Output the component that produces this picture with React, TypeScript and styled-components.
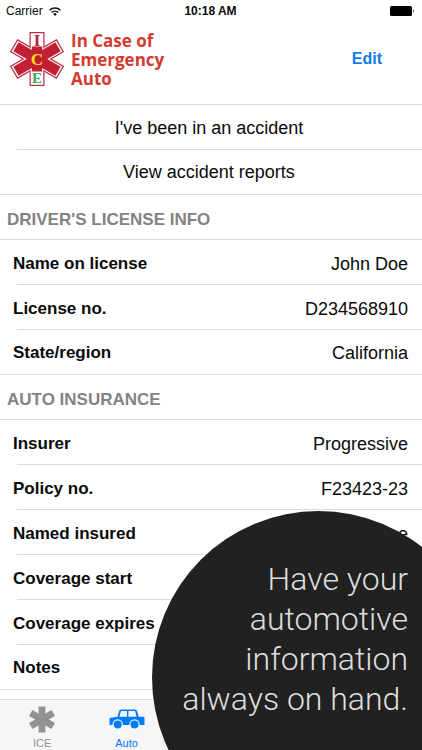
import React from "react";
import styled, { createGlobalStyle } from "styled-components";

const GlobalStyle = createGlobalStyle`
  *, *::before, *::after { box-sizing: border-box; }
  body {
    margin: 0;
    background: #fff;
    color: #0a0a0a;
    font-family: "Liberation Sans", Arial, sans-serif;
  }
`;

const line = "#dedee0";
const blue = "#007aff";

const Screen = styled.div`
  position: relative;
  display: flex;
  flex-direction: column;
  height: 100vh;
  overflow: hidden;
`;

const StatusBar = styled.div`
  display: grid;
  grid-template-columns: 1fr auto 1fr;
  align-items: center;
  height: 22px;
  flex: none;
  padding: 0 7px 0 6px;
  font-size: 12px;
  line-height: 20px;
`;

const Carrier = styled.span`
  display: flex;
  align-items: center;
  gap: 6px;
`;

const Clock = styled.time`
  font-weight: 700;
`;

const Battery = styled.svg`
  justify-self: end;
`;

const Header = styled.header`
  display: flex;
  align-items: center;
  justify-content: space-between;
  flex: none;
  height: 83px;
  padding: 0 40px 8px 10px;
  border-bottom: 1px solid ${line};
`;

const Brand = styled.div`
  display: flex;
  align-items: center;
  gap: 7px;
`;

const BrandName = styled.h1`
  width: 100px;
  margin: 0;
  color: #d43b30;
  font-family: "Open Sans", "Noto Sans", sans-serif;
  font-size: 17px;
  font-weight: 700;
  line-height: 19px;
`;

const EditButton = styled.button`
  padding: 0;
  border: 0;
  background: none;
  color: #1279ee;
  font: 700 16px/20px "Liberation Sans", Arial, sans-serif;
`;

const Content = styled.main`
  flex: 1;
  min-height: 0;
  overflow: hidden;
`;

const Group = styled.div`
  border-bottom: 1px solid ${line};

  & > * + *::before {
    content: "";
    position: absolute;
    top: -1px;
    left: 17px;
    right: 0;
    border-top: 1px solid ${line};
  }
`;

const ActionButton = styled.button`
  position: relative;
  display: block;
  width: 100%;
  height: 45px;
  padding: 0 4px 0 0;
  border: 0;
  background: none;
  color: inherit;
  font: 400 18px/44px "Liberation Sans", Arial, sans-serif;

  &:last-child { height: 44px; }
`;

const SectionTitle = styled.h2`
  height: 45px;
  margin: 0;
  padding: 3px 7px 0;
  border-bottom: 1px solid ${line};
  color: #838383;
  font-size: 17px;
  font-weight: 700;
  line-height: 44px;
`;

const Fields = styled(Group).attrs({ as: "dl" })`
  margin: 0;
`;

const Field = styled.div`
  position: relative;
  display: flex;
  justify-content: space-between;
  height: 45px;
  padding: 0 14px 0 13px;
  font-size: 17px;
  line-height: 48px;

  &:last-child {
    height: 44px;
    line-height: 46px;
  }
`;

const Label = styled.dt`
  font-weight: 700;
`;

const Value = styled.dd`
  margin: 0;
  font-size: 18px;
`;

const TabBar = styled.nav`
  display: flex;
  flex: none;
  height: 51px;
  border-top: 1px solid ${line};
  background: #f6f6f6;
`;

const Tab = styled.a<{ $active?: boolean }>`
  display: flex;
  flex: 0 0 20%;
  flex-direction: column;
  align-items: center;
  gap: 3px;
  padding-top: 6px;
  color: ${(p) => (p.$active ? blue : "#929292")};
  font-size: 11px;
  line-height: 14px;
  text-decoration: none;
`;

const Callout = styled.aside`
  position: absolute;
  right: -63px;
  bottom: -94px;
  width: 333px;
  height: 333px;
  padding: 48px 77px 0 0;
  border-radius: 50%;
  background: #212121;
  color: #dedede;
  font-family: Roboto, sans-serif;
  font-size: 32px;
  font-weight: 300;
  line-height: 40px;
  text-align: right;
  white-space: nowrap;
`;

const CalloutText = styled.p`
  margin: 0;
`;

const angles = [60, -60, 0];

const StarLogo = () => (
  <svg width="54" height="56" viewBox="-27 -28 54 56" aria-hidden="true">
    {angles.map((a) => (
      <rect key={a} x="-7.5" y="-27" width="15" height="54" fill="#b92c3c" transform={`rotate(${a})`} />
    ))}
    {angles.map((a) => (
      <rect key={a} x="-6.3" y="-25.8" width="12.6" height="51.6" fill="#fff" transform={`rotate(${a})`} />
    ))}
    {angles.slice(0, 2).map((a) => (
      <rect key={a} x="-5.2" y="-24.3" width="10.4" height="48.6" fill="#c21f35" transform={`rotate(${a})`} />
    ))}
    <rect x="-5.2" y="-12.5" width="10.4" height="25" fill="#c21f35" />
    <g fontFamily="Liberation Serif" fontWeight="700" textAnchor="middle">
      <text y="-13" fontSize="17" fill="#b3203a">I</text>
      <text y="5.5" fontSize="17" fill="#ffe11a">C</text>
      <text y="24" fontSize="15" fill="#35ad5c">E</text>
    </g>
  </svg>
);

const WifiIcon = () => (
  <svg width="12" height="9" viewBox="0 0 12 9" fill="none" stroke="#111" strokeWidth="1.5" aria-hidden="true">
    <path d="M.6 3.3a7.7 7.7 0 0 1 10.8 0M2.6 5.5a4.9 4.9 0 0 1 6.8 0" />
    <path d="M6 9 4.1 7a2.8 2.8 0 0 1 3.8 0z" fill="#111" stroke="none" />
  </svg>
);

const BatteryIcon = () => (
  <Battery width="25" height="10" viewBox="0 0 25 10" aria-label="Battery full">
    <rect width="22" height="10" rx="1.5" />
    <path d="M23 3.2q1.8 1.8 0 3.6z" />
  </Battery>
);

const AsteriskIcon = () => (
  <svg width="26" height="27" viewBox="-13 -13.5 26 27" fill="currentColor" aria-hidden="true">
    {angles.map((a) => (
      <rect key={a} x="-3.4" y="-13" width="6.8" height="26" transform={`rotate(${a})`} />
    ))}
  </svg>
);

const CarIcon = () => (
  <svg width="36" height="27" viewBox="0 0 36 27" aria-hidden="true">
    <path
      fill="currentColor"
      fillRule="evenodd"
      d="M12 3.5h14q1.6 0 2 1.5l1.7 5.800H34q1.5 0 1.5 1.5V19H.5v-5.700q0-1.300 1.300-1.500L8.500 10.800l1.700-5.800Q10.600 3.500 12 3.500zM12 5 10.400 10.800H18V5zM19.400 5v5.800h8.200L26 5z"
    />
    <g fill="currentColor" stroke="#f6f6f6" strokeWidth="1.2">
      <circle cx="8.7" cy="18.5" r="4.6" />
      <circle cx="25.5" cy="18.5" r="4.6" />
    </g>
  </svg>
);

const license = [
  ["Name on license", "John Doe"],
  ["License no.", "D234568910"],
  ["State/region", "California"],
];

const insurance = [
  ["Insurer", "Progressive"],
  ["Policy no.", "F23423-23"],
  ["Named insured", "John Doe"],
  ["Coverage start", ""],
  ["Coverage expires", ""],
  ["Notes", ""],
];

const FieldList = ({ items }: { items: string[][] }) => (
  <Fields>
    {items.map(([label, value]) => (
      <Field key={label}>
        <Label>{label}</Label>
        <Value>{value}</Value>
      </Field>
    ))}
  </Fields>
);

export default function App() {
  return (
    <Screen>
      <GlobalStyle />
      <StatusBar>
        <Carrier>
          Carrier
          <WifiIcon />
        </Carrier>
        <Clock>10:18 AM</Clock>
        <BatteryIcon />
      </StatusBar>
      <Header>
        <Brand>
          <StarLogo />
          <BrandName>In Case of Emergency Auto</BrandName>
        </Brand>
        <EditButton type="button">Edit</EditButton>
      </Header>
      <Content>
        <Group>
          <ActionButton type="button">I've been in an accident</ActionButton>
          <ActionButton type="button">View accident reports</ActionButton>
        </Group>
        <SectionTitle>DRIVER'S LICENSE INFO</SectionTitle>
        <FieldList items={license} />
        <SectionTitle>AUTO INSURANCE</SectionTitle>
        <FieldList items={insurance} />
      </Content>
      <TabBar>
        <Tab href="#ice">
          <AsteriskIcon />
          ICE
        </Tab>
        <Tab href="#auto" $active aria-current="page">
          <CarIcon />
          Auto
        </Tab>
      </TabBar>
      <Callout>
        <CalloutText>
          Have your
          <br />
          automotive
          <br />
          information
          <br />
          always on hand.
        </CalloutText>
      </Callout>
    </Screen>
  );
}
